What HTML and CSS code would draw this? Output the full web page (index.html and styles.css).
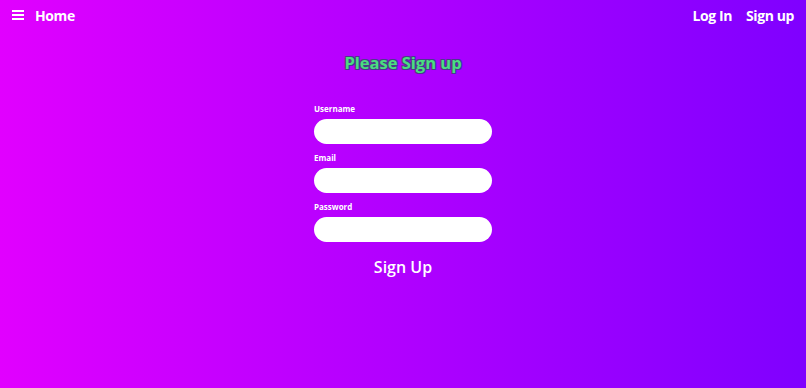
FILE: index.html
```html
<!DOCTYPE html>
<html lang="en">
<head>
<meta charset="utf-8">
<title>Sign up</title>
<link rel="stylesheet" href="styles.css">
</head>
<body>
<nav class="navbar">
  <div class="nav-left">
    <svg class="burger" width="12" height="10" viewBox="0 0 12 10"><rect x="0" y="0" width="12" height="2" fill="#fff"/><rect x="0" y="4" width="12" height="2" fill="#fff"/><rect x="0" y="8" width="12" height="2" fill="#fff"/></svg>
    <a class="nav-link" href="#">Home</a>
  </div>
  <div class="nav-right">
    <a class="nav-link" href="#">Log In</a>
    <a class="nav-link" href="#">Sign up</a>
  </div>
</nav>
<main class="content">
  <h1 class="title">Please Sign up</h1>
  <form class="form">
    <label class="label">Username</label>
    <input class="field" type="text">
    <label class="label">Email</label>
    <input class="field" type="email">
    <label class="label">Password</label>
    <input class="field" type="password">
    <button class="submit" type="button">Sign Up</button>
  </form>
</main>
</body>
</html>
```
FILE: styles.css
```css
html, body {
  margin: 0;
  height: 100%;
}
body {
  background: linear-gradient(to right, #e100ff, #7f00ff);
  font-family: "Open Sans", "Liberation Sans", sans-serif;
  color: #fff;
}
.navbar {
  display: flex;
  justify-content: space-between;
  align-items: center;
  height: 30px;
  padding: 0 12px;
}
.nav-left, .nav-right {
  display: flex;
  align-items: center;
}
.burger {
  margin-right: 11px;
}
.nav-right {
  gap: 14px;
}
.nav-link {
  color: #fff;
  text-decoration: none;
  font-weight: 700;
  font-size: 14px;
  letter-spacing: -0.4px;
}
.content {
  display: flex;
  flex-direction: column;
  align-items: center;
}
.title {
  margin: 21px 0 0;
  font-size: 16.5px;
  font-weight: 700;
  color: #4ade80;
  text-shadow: -1px -1px 0 #4b3a8a, 1px -1px 0 #4b3a8a, -1px 1px 0 #4b3a8a, 1px 1px 0 #4b3a8a;
  letter-spacing: 0;
  line-height: 24px;
}
.form {
  display: flex;
  flex-direction: column;
  width: 178px;
  margin-top: 28px;
}
.label {
  font-size: 8px;
  font-weight: 700;
  line-height: 11px;
  margin-bottom: 5px;
}
.field {
  height: 25px;
  box-sizing: border-box;
  border: none;
  border-radius: 13px;
  background: #fff;
  margin: 0 0 8px;
  outline: none;
}
.submit {
  align-self: center;
  background: none;
  border: none;
  color: #fff;
  font-family: inherit;
  font-size: 16px;
  font-weight: 600;
  padding: 0;
  margin-top: 5px;
  line-height: 24px;
}
```
